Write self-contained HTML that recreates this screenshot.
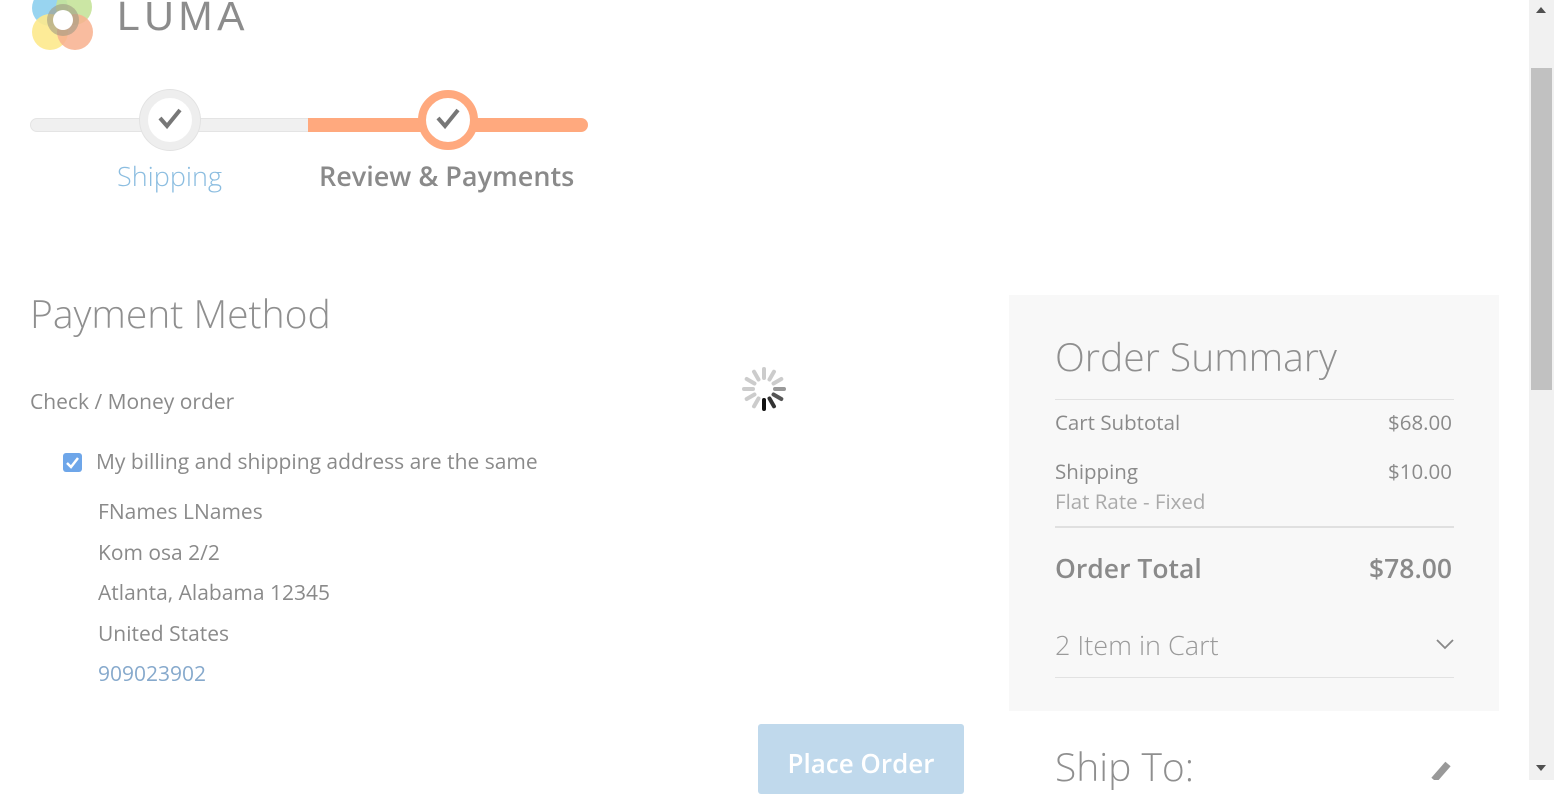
<!DOCTYPE html>
<html><head><style>
*{margin:0;padding:0;box-sizing:border-box}
body{width:1554px;height:780px;overflow:hidden;background:#fff;font-family:"Open Sans","Liberation Sans",sans-serif;color:#8a8a8a;position:relative}
.a{position:absolute;white-space:nowrap}
</style></head><body>
<svg class="a" style="left:28px;top:-12px" width="74" height="68">
<circle cx="22" cy="20" r="18" fill="#8dcfee" opacity=".9"/>
<circle cx="46" cy="19" r="18" fill="#c5e39a" opacity=".9"/>
<circle cx="22" cy="44" r="18" fill="#fde98c" opacity=".9"/>
<circle cx="47" cy="44" r="18" fill="#f8b08e" opacity=".85"/>
<circle cx="35" cy="32" r="16" fill="#a09a84" opacity=".6"/>
<circle cx="35" cy="32" r="10" fill="#fff"/>
</svg>
<div class="a" style="left:117px;top:-7px;font-size:41px;letter-spacing:4.5px;color:#8c8c8c;font-family:'Liberation Sans',sans-serif">LUMA</div>
<div class="a" style="left:30px;top:118px;width:280px;height:14px;background:#f0f0f0;border:1px solid #e4e4e4;border-radius:7px 0 0 7px"></div>
<div class="a" style="left:308px;top:118px;width:280px;height:14px;background:#ffa97e;border-radius:0 7px 7px 0"></div>
<div class="a" style="left:140px;top:90px;width:60px;height:60px;border-radius:50%;background:#fff;border:8px solid #eeeeee;box-shadow:0 0 0 1px #e2e2e2"></div>
<div class="a" style="left:418px;top:90px;width:60px;height:60px;border-radius:50%;background:#fff;border:8px solid #ffa97e"></div>
<svg class="a" style="left:156px;top:104px" width="28" height="28"><path d="M4 14 L11 22 L24 6" stroke="#777" stroke-width="4" fill="none"/></svg>
<svg class="a" style="left:434px;top:104px" width="28" height="28"><path d="M4 14 L11 22 L24 6" stroke="#777" stroke-width="4" fill="none"/></svg>
<div class="a" style="left:117px;top:157px;font-size:27px;font-weight:300;color:#8bbde0">Shipping</div>
<div class="a" style="left:319px;top:157px;font-size:27px;font-weight:600;color:#8a8a8a">Review &amp; Payments</div>
<div class="a" style="left:30px;top:287px;font-size:39px;font-weight:300;color:#8f8f8f">Payment Method</div>
<div class="a" style="left:30px;top:388px;font-size:21px">Check / Money order</div>
<div class="a" style="left:63px;top:453px;width:19px;height:19px;background:#6ea6e9;border-radius:3px"></div>
<svg class="a" style="left:63px;top:453px" width="19" height="19"><path d="M4 10 L8 14 L15 5" stroke="#fff" stroke-width="2.5" fill="none"/></svg>
<div class="a" style="left:96px;top:448px;font-size:21px">My billing and shipping address are the same</div>
<div class="a" style="left:98px;top:492px;font-size:21px;line-height:40.5px">FNames LNames<br>Kom osa 2/2<br>Atlanta, Alabama 12345<br>United States<br><span style="color:#86a9cc">909023902</span></div>
<svg class="a" style="left:739px;top:364px" width="50" height="50">
<g transform="translate(25,25)" stroke-linecap="round" stroke-width="4">
<line x1="0" y1="-11" x2="0" y2="-20" stroke="#ccc" transform="rotate(0)"/>
<line x1="0" y1="-11" x2="0" y2="-20" stroke="#ccc" transform="rotate(30)"/>
<line x1="0" y1="-11" x2="0" y2="-20" stroke="#ccc" transform="rotate(60)"/>
<line x1="0" y1="-11" x2="0" y2="-20" stroke="#999" transform="rotate(90)"/>
<line x1="0" y1="-11" x2="0" y2="-20" stroke="#555" transform="rotate(120)"/>
<line x1="0" y1="-11" x2="0" y2="-20" stroke="#333" transform="rotate(150)"/>
<line x1="0" y1="-11" x2="0" y2="-20" stroke="#111" transform="rotate(180)"/>
<line x1="0" y1="-11" x2="0" y2="-20" stroke="#ccc" transform="rotate(210)"/>
<line x1="0" y1="-11" x2="0" y2="-20" stroke="#ccc" transform="rotate(240)"/>
<line x1="0" y1="-11" x2="0" y2="-20" stroke="#ccc" transform="rotate(270)"/>
<line x1="0" y1="-11" x2="0" y2="-20" stroke="#ccc" transform="rotate(300)"/>
<line x1="0" y1="-11" x2="0" y2="-20" stroke="#ccc" transform="rotate(330)"/>
</g></svg>
<div class="a" style="left:758px;top:724px;width:206px;height:70px;background:#c0d9ec;border-radius:3px;color:#fff;font-size:26px;font-weight:600;text-align:center;padding-top:21px">Place Order</div>
<div class="a" style="left:1009px;top:295px;width:490px;height:416px;background:#f8f8f8"></div>
<div class="a" style="left:1055px;top:330px;font-size:39px;font-weight:300;color:#8f8f8f">Order Summary</div>
<div class="a" style="left:1055px;top:399px;width:399px;height:1px;background:#e2e2e2"></div>
<div class="a" style="left:1055px;top:409px;font-size:20.5px">Cart Subtotal</div>
<div class="a" style="left:1388px;top:409px;font-size:20.5px">$68.00</div>
<div class="a" style="left:1055px;top:458px;font-size:20.5px">Shipping</div>
<div class="a" style="left:1388px;top:458px;font-size:20.5px">$10.00</div>
<div class="a" style="left:1055px;top:488px;font-size:20.5px;color:#aaa">Flat Rate - Fixed</div>
<div class="a" style="left:1055px;top:526px;width:399px;height:2px;background:#e0e0e0"></div>
<div class="a" style="left:1055px;top:550px;font-size:26.5px;font-weight:600">Order Total</div>
<div class="a" style="left:1369px;top:550px;font-size:26.5px;font-weight:600">$78.00</div>
<div class="a" style="left:1055px;top:626px;font-size:27px;font-weight:300;color:#9a9a9a">2 Item in Cart</div>
<svg class="a" style="left:1436px;top:638px" width="18" height="12"><path d="M1 2 L9 10 L17 2" stroke="#888" stroke-width="1.8" fill="none"/></svg>
<div class="a" style="left:1055px;top:677px;width:399px;height:1px;background:#e2e2e2"></div>
<div class="a" style="left:1055px;top:740px;font-size:39px;font-weight:300;color:#8f8f8f">Ship To:</div>
<svg class="a" style="left:1430px;top:760px" width="24" height="20"><path d="M4 20 L18 4" stroke="#999" stroke-width="7"/></svg>
<div class="a" style="left:1529px;top:0;width:25px;height:780px;background:#f1f1f1"></div>
<div class="a" style="left:1531px;top:68px;width:21px;height:322px;background:#c1c1c1"></div>
<svg class="a" style="left:1535px;top:6px" width="12" height="8"><path d="M1 7 L6 1 L11 7Z" fill="#505050"/></svg>
<svg class="a" style="left:1535px;top:764px" width="12" height="8"><path d="M1 1 L6 7 L11 1Z" fill="#505050"/></svg>
</body></html>
